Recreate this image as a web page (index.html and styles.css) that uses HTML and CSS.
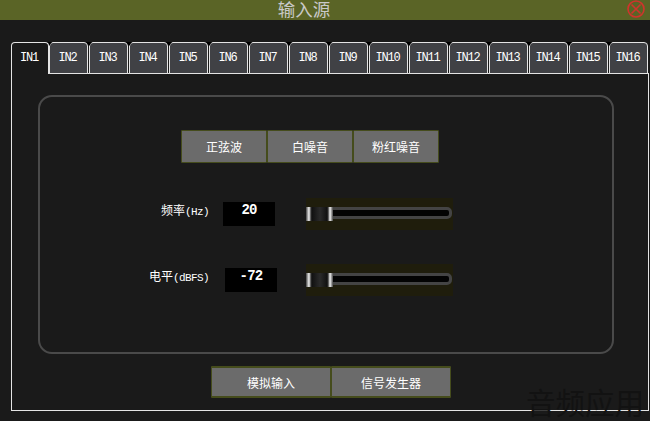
FILE: index.html
```html
<!DOCTYPE html>
<html lang="zh-CN">
<head>
    <meta charset="UTF-8">
    <title>输入源</title>
    <link rel="stylesheet" href="styles.css">
</head>
<body>
    <div class="titlebar">
        <span class="title">输入源</span>
        <svg class="close" width="18" height="18" viewBox="0 0 18 18">
            <circle cx="9" cy="9" r="8" fill="none" stroke="#d0342c" stroke-width="1.6"/>
            <path d="M4.5 4.5 L13.5 13.5 M13.5 4.5 L4.5 13.5" stroke="#d0342c" stroke-width="1.6"/>
        </svg>
    </div>

    <div class="tabs">
        <div class="tab active">IN1</div>
        <div class="tab">IN2</div>
        <div class="tab">IN3</div>
        <div class="tab">IN4</div>
        <div class="tab">IN5</div>
        <div class="tab">IN6</div>
        <div class="tab">IN7</div>
        <div class="tab">IN8</div>
        <div class="tab">IN9</div>
        <div class="tab">IN10</div>
        <div class="tab">IN11</div>
        <div class="tab">IN12</div>
        <div class="tab">IN13</div>
        <div class="tab">IN14</div>
        <div class="tab">IN15</div>
        <div class="tab">IN16</div>
    </div>

    <div class="frame">
        <div class="panel">
            <div class="wave-buttons">
                <button class="btn wave">正弦波</button>
                <button class="btn wave">白噪音</button>
                <button class="btn wave">粉红噪音</button>
            </div>

            <div class="row row-freq">
                <span class="label">频率<span class="latin">(Hz)</span></span>
                <span class="value">20</span>
                <div class="slider">
                    <div class="track"></div>
                    <div class="thumb"></div>
                </div>
            </div>

            <div class="row row-level">
                <span class="label">电平<span class="latin">(dBFS)</span></span>
                <span class="value">-72</span>
                <div class="slider">
                    <div class="track"></div>
                    <div class="thumb"></div>
                </div>
            </div>
        </div>

        <div class="source-buttons">
            <button class="btn source">模拟输入</button>
            <button class="btn source">信号发生器</button>
        </div>
    </div>

    <div class="watermark">音频应用</div>
</body>
</html>
```

FILE: styles.css
```css
html, body {
    margin: 0;
    height: 421px;
    overflow: hidden;
}
body {
    position: relative;
    background-color: #1a1a1a;
    font-family: "Liberation Mono", "Noto Sans CJK SC", monospace;
    color: #fff;
}
.titlebar {
    position: relative;
    height: 20px;
    background-color: #5a6426;
    display: flex;
    justify-content: center;
    align-items: center;
}
.title {
    margin: 0 42px 2px 0;
    font-family: "Noto Sans CJK SC", sans-serif;
    font-size: 17.5px;
    line-height: 20px;
    color: #c9c9c9;
}
.close {
    position: absolute;
    right: 5px;
    top: 0;
}
.tabs {
    display: flex;
    gap: 1px;
    margin: 22px 0 0 11px;
}
.tab {
    position: relative;
    box-sizing: border-box;
    width: 39px;
    height: 32px;
    padding-right: 2px;
    border: 1px solid #e4e4e4;
    border-radius: 4px 4px 0 0;
    background-color: #404145;
    font-size: 12px;
    letter-spacing: -1.2px;
    line-height: 30px;
    text-align: center;
}
/* 标签之间的黑色小三角 */
.tab::before {
    content: "";
    position: absolute;
    left: -4px;
    top: -1px;
    border-left: 3px solid transparent;
    border-right: 3px solid transparent;
    border-top: 4px solid #000;
}
.tab:first-child::before {
    display: none;
}
.tab.active {
    width: 38px;
    margin-right: -1px;
    background-color: #1a1a1a;
    border-bottom: none;
    z-index: 1;
}
.frame {
    box-sizing: border-box;
    width: 638px;
    height: 338px;
    margin: -1px 0 0 11px;
    padding: 21px 0 0 26px;
    border: 1px solid #e4e4e4;
}
.panel {
    box-sizing: border-box;
    width: 576px;
    height: 259px;
    padding-top: 33px;
    border: 2px solid #4a4a4a;
    border-radius: 14px;
}
.btn {
    box-sizing: border-box;
    padding: 0;
    border: 1px solid #454c1c;
    border-radius: 1px;
    background-color: #6b6b6b;
    color: #fff;
    font-family: "Noto Sans CJK SC", sans-serif;
    font-size: 12px;
}
.wave-buttons {
    display: flex;
    margin-left: 141px;
}
.wave {
    width: 86px;
    height: 33px;
}
.row {
    display: flex;
    align-items: center;
    height: 32px;
}
.row-freq {
    margin-top: 35px;
}
.row-level {
    margin-top: 34px;
}
.label {
    width: 169px;
    margin-bottom: 9px;
    text-align: right;
    font-family: "Noto Sans CJK SC", sans-serif;
    font-size: 12px;
}
.latin {
    font-family: "Liberation Mono", monospace;
    font-size: 11px;
    letter-spacing: -0.6px;
}
.value {
    width: 52px;
    height: 24px;
    background-color: #000;
    font-size: 14px;
    font-weight: bold;
    letter-spacing: -0.8px;
    line-height: 16px;
    text-align: center;
}
.row-freq .value {
    margin-left: 14px;
}
.row-level .value {
    margin-left: 16px;
}
.slider {
    position: relative;
    display: flex;
    align-items: center;
    width: 147px;
    height: 32px;
    background-color: #1f1d0c;
}
.row-freq .slider {
    margin-left: 31px;
}
.row-level .slider {
    margin-left: 29px;
}
.track {
    box-sizing: border-box;
    width: 146px;
    height: 12px;
    margin-bottom: 2px;
    border: 3px solid #444;
    border-radius: 0 5px 5px 0;
    background-color: #030303;
}
.thumb {
    position: absolute;
    left: 0;
    top: 9px;
    width: 27px;
    height: 14px;
    background: linear-gradient(to right, #444 0, #f4f4f4 3px, #333 5px, #111 6px, #2a2a2a 14px, #111 21px, #333 22px, #f4f4f4 24px, #444 27px);
}
.source-buttons {
    display: flex;
    margin: 12px 0 0 173px;
}
.source {
    width: 120px;
    height: 32px;
    border-width: 2px 1px;
}
.watermark {
    position: absolute;
    left: 526px;
    top: 384px;
    font-family: "Noto Sans CJK SC", sans-serif;
    font-size: 29.5px;
    line-height: 34px;
    color: #121212;
    white-space: nowrap;
}
```
